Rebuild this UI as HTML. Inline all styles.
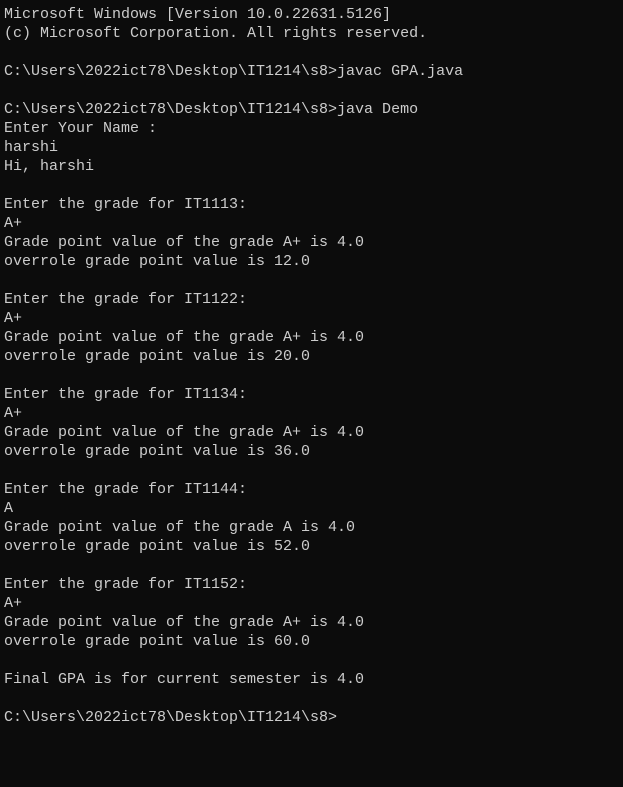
<!DOCTYPE html>
<html><head><style>
html,body{margin:0;padding:0;background:#0c0c0c;width:623px;height:787px;overflow:hidden}
pre{margin:0;padding:5px 0 0 4px;font-family:"Liberation Mono",monospace;font-size:15px;line-height:19px;color:#cccccc;white-space:pre}
</style></head><body><pre>Microsoft Windows [Version 10.0.22631.5126]
(c) Microsoft Corporation. All rights reserved.

C:\Users\2022ict78\Desktop\IT1214\s8&gt;javac GPA.java

C:\Users\2022ict78\Desktop\IT1214\s8&gt;java Demo
Enter Your Name :
harshi
Hi, harshi

Enter the grade for IT1113:
A+
Grade point value of the grade A+ is 4.0
overrole grade point value is 12.0

Enter the grade for IT1122:
A+
Grade point value of the grade A+ is 4.0
overrole grade point value is 20.0

Enter the grade for IT1134:
A+
Grade point value of the grade A+ is 4.0
overrole grade point value is 36.0

Enter the grade for IT1144:
A
Grade point value of the grade A is 4.0
overrole grade point value is 52.0

Enter the grade for IT1152:
A+
Grade point value of the grade A+ is 4.0
overrole grade point value is 60.0

Final GPA is for current semester is 4.0

C:\Users\2022ict78\Desktop\IT1214\s8&gt;</pre></body></html>
